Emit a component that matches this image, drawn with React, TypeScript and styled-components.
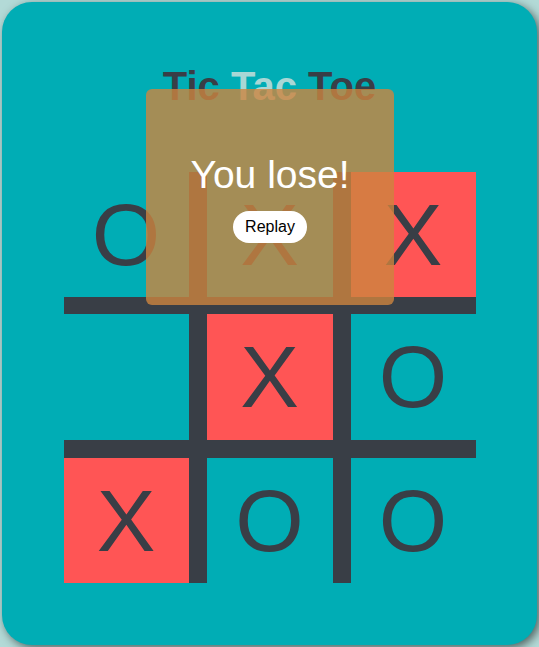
import React, { useState } from 'react';
import styled, { createGlobalStyle } from 'styled-components';

const GlobalStyle = createGlobalStyle`
  html, body {
    margin: 0;
    padding: 0;
    background: #b3dad7;
    font-family: "Liberation Sans", Arial, sans-serif;
  }
`;

const Page = styled.div`
  width: 539px;
  height: 647px;
  padding: 2px;
  box-sizing: border-box;
`;

const Card = styled.div`
  position: relative;
  width: 535px;
  height: 643px;
  box-sizing: border-box;
  padding-top: 62px;
  background: #00adb5;
  border-radius: 30px;
  box-shadow: 3px 3px 10px rgba(0, 0, 0, 0.55);
  display: flex;
  flex-direction: column;
  align-items: center;
`;

const Title = styled.h1`
  margin: 0 0 64px;
  font-size: 40px;
  line-height: 44px;
  font-weight: 700;
  color: #393e46;
`;

const Light = styled.span`
  color: #a9d7d5;
`;

const Board = styled.div`
  display: grid;
  grid-template-columns: 125px 162px 125px;
  grid-template-rows: 125px 161px 125px;
`;

const Cell = styled.div<{ $col: number; $row: number; $win: boolean }>`
  display: flex;
  align-items: center;
  justify-content: center;
  box-sizing: border-box;
  background: ${({ $win }) => ($win ? '#ff5555' : 'transparent')};
  background-clip: padding-box;
  border-left: ${({ $col }) => ($col === 1 ? '18px solid #393e46' : 'none')};
  border-right: ${({ $col }) => ($col === 1 ? '18px solid #393e46' : 'none')};
  border-top: ${({ $row }) => ($row === 1 ? '17px solid #393e46' : 'none')};
  border-bottom: ${({ $row }) => ($row === 1 ? '18px solid #393e46' : 'none')};
  font-size: 88px;
  line-height: 1;
  color: #393e46;
`;

const Overlay = styled.div`
  position: absolute;
  left: 144px;
  top: 87px;
  width: 248px;
  height: 216px;
  border-radius: 6px;
  background: rgba(205, 133, 63, 0.8);
  display: flex;
  flex-direction: column;
  align-items: center;
  padding-top: 64px;
  box-sizing: border-box;
`;

const Message = styled.div`
  font-size: 39px;
  line-height: 44px;
  color: #ffffff;
  margin-bottom: 14px;
`;

const ReplayButton = styled.button`
  height: 32px;
  padding: 0 12px;
  border: none;
  border-radius: 16px;
  background: #ffffff;
  color: #000000;
  font-family: "Liberation Sans", Arial, sans-serif;
  font-size: 16px;
  cursor: pointer;
`;

const initial = ['O', 'X', 'X', '', 'X', 'O', 'X', 'O', 'O'];
const winning = [2, 4, 6];

const App: React.FC = () => {
  const [cells] = useState(initial);

  return (
    <Page>
      <GlobalStyle />
      <Card>
        <Title>
          Tic <Light>Tac</Light> Toe
        </Title>
        <Board>
          {cells.map((c, i) => (
            <Cell key={i} $col={i % 3} $row={Math.floor(i / 3)} $win={winning.includes(i)}>
              {c}
            </Cell>
          ))}
        </Board>
        <Overlay>
          <Message>You lose!</Message>
          <ReplayButton>Replay</ReplayButton>
        </Overlay>
      </Card>
    </Page>
  );
};

export default App;
